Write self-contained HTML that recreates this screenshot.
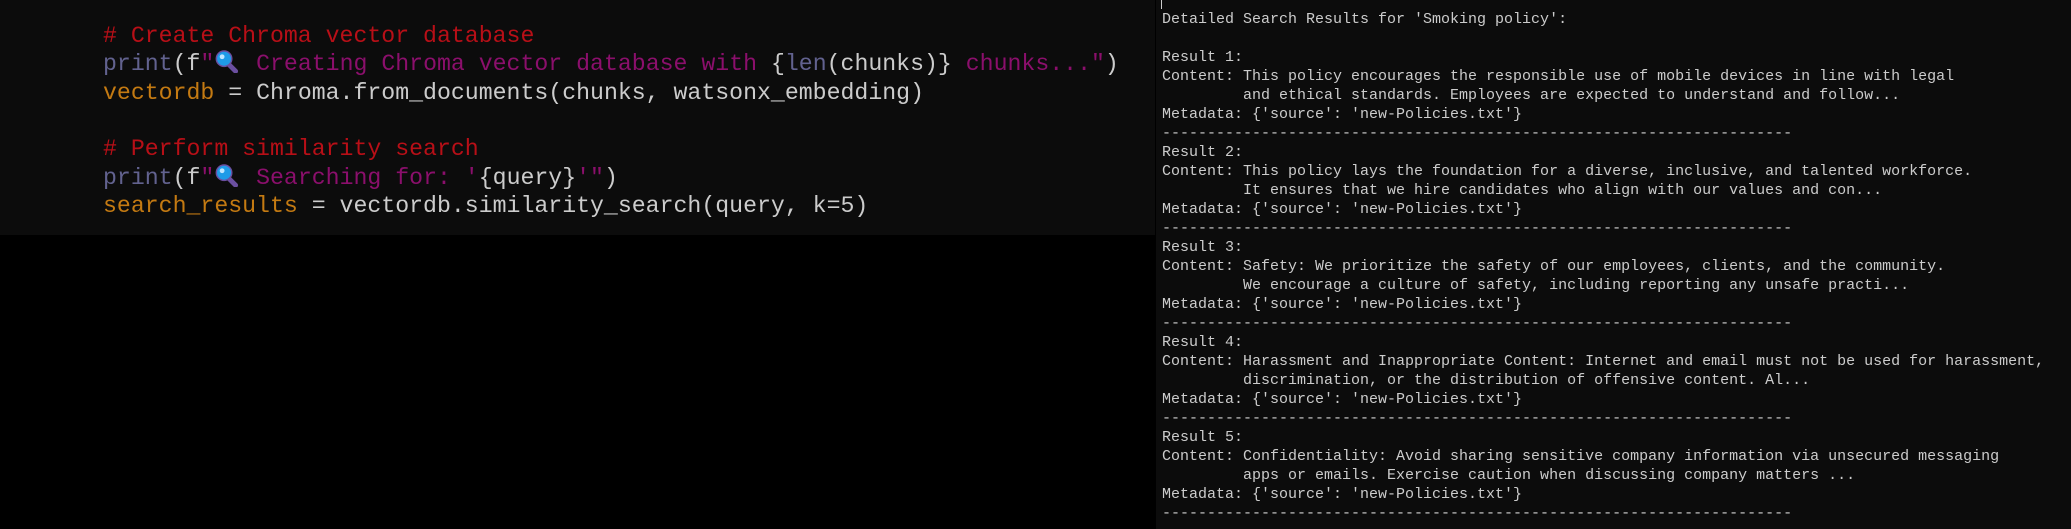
<!DOCTYPE html>
<html><head><meta charset="utf-8"><style>
html,body{margin:0;padding:0;width:2071px;height:529px;background:#000;overflow:hidden}
#left{position:absolute;left:0;top:0;width:1155px;height:235px;background:#0c0c0c}
#code{position:absolute;left:103px;top:22px;font-family:"Liberation Mono",monospace;font-size:23.2px;line-height:28.3px;white-space:pre;color:#cccccc}
.c{color:#b80f17}.p{color:#62628f}.s{color:#8b0f6c}.o{color:#c47a12}
.e{display:inline-block;width:2ch;height:1em;vertical-align:-3px}
#right{position:absolute;left:1156px;top:0;width:915px;height:529px;background:#0c0c0c}
#out{position:absolute;left:6px;top:10px;font-family:"Liberation Mono",monospace;font-size:15px;line-height:19px;white-space:pre;color:#cccccc}
#cur{position:absolute;left:5px;top:0;width:1px;height:9px;background:#ccc}
</style></head><body>
<div id="left"><div id="code"><span class="c"># Create Chroma vector database</span>
<span class="p">print</span>(f<span class="s">"</span><svg class="e" viewBox="0 0 28 24"><line x1="13" y1="13" x2="22" y2="22" stroke="#6b4fa0" stroke-width="5" stroke-linecap="round"/><circle cx="10" cy="9" r="8" fill="#1e9be8" stroke="#6b4fa0" stroke-width="1.5"/><circle cx="8" cy="7" r="2.5" fill="#bfe6ff"/></svg><span class="s"> Creating Chroma vector database with </span>{<span class="p">len</span>(chunks)}<span class="s"> chunks..."</span>)
<span class="o">vectordb</span> = Chroma.from_documents(chunks, watsonx_embedding)

<span class="c"># Perform similarity search</span>
<span class="p">print</span>(f<span class="s">"</span><svg class="e" viewBox="0 0 28 24"><line x1="13" y1="13" x2="22" y2="22" stroke="#6b4fa0" stroke-width="5" stroke-linecap="round"/><circle cx="10" cy="9" r="8" fill="#1e9be8" stroke="#6b4fa0" stroke-width="1.5"/><circle cx="8" cy="7" r="2.5" fill="#bfe6ff"/></svg><span class="s"> Searching for: '</span>{query}<span class="s">'"</span>)
<span class="o">search_results</span> = vectordb.similarity_search(query, k=5)</div></div>
<div id="right"><div id="cur"></div><div id="out">Detailed Search Results for 'Smoking policy':

Result 1:
Content: This policy encourages the responsible use of mobile devices in line with legal
         and ethical standards. Employees are expected to understand and follow...
Metadata: {'source': 'new-Policies.txt'}
----------------------------------------------------------------------
Result 2:
Content: This policy lays the foundation for a diverse, inclusive, and talented workforce.
         It ensures that we hire candidates who align with our values and con...
Metadata: {'source': 'new-Policies.txt'}
----------------------------------------------------------------------
Result 3:
Content: Safety: We prioritize the safety of our employees, clients, and the community.
         We encourage a culture of safety, including reporting any unsafe practi...
Metadata: {'source': 'new-Policies.txt'}
----------------------------------------------------------------------
Result 4:
Content: Harassment and Inappropriate Content: Internet and email must not be used for harassment,
         discrimination, or the distribution of offensive content. Al...
Metadata: {'source': 'new-Policies.txt'}
----------------------------------------------------------------------
Result 5:
Content: Confidentiality: Avoid sharing sensitive company information via unsecured messaging
         apps or emails. Exercise caution when discussing company matters ...
Metadata: {'source': 'new-Policies.txt'}
----------------------------------------------------------------------</div></div>
</body></html>
